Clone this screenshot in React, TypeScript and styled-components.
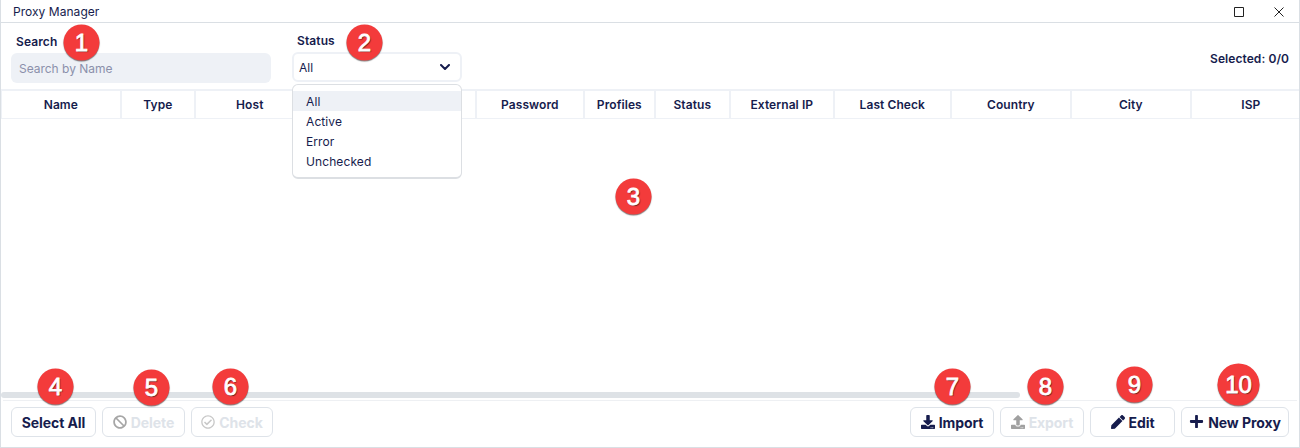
import React from "react";
import styled, { createGlobalStyle } from "styled-components";
import { FaBan, FaRegCheckCircle, FaDownload, FaUpload, FaPlus, FaPen } from "react-icons/fa";

const Global = createGlobalStyle`
  * { box-sizing: border-box; }
  body { margin: 0; background: #fff; font-family: Inter, sans-serif; color: #161c4d; }
`;

const Window = styled.div`
  position: relative;
  display: flex;
  flex-direction: column;
  width: 1300px;
  height: 448px;
  overflow: hidden;
  border: 1px solid #dadfe4;
  border-top: 0;
  background: #fff;
`;

const TitleBar = styled.header`
  display: flex;
  align-items: center;
  justify-content: space-between;
  height: 23px;
  padding: 1px 14px 0 12px;
  border-bottom: 1px solid #dadfe4;
  font-size: 12px;
  letter-spacing: 0.04px;
`;

const WindowControls = styled.div`
  display: flex;
  gap: 29px;
  align-items: center;

  svg {
    position: relative;
    top: 0.5px;
  }
`;

const Filters = styled.section`
  display: flex;
  height: 66px;
  padding: 10px 10px 0;
`;

const Field = styled.div<{ $width: number }>`
  position: relative;
  width: ${(p) => p.$width}px;
  margin-right: 21px;
`;

const Label = styled.label<{ $lift?: number }>`
  display: block;
  height: 20px;
  padding-left: 5px;
  line-height: ${(p) => 18 - (p.$lift ?? 0) * 2}px;
  font-size: 12px;
  font-weight: 600;
  letter-spacing: 0.1px;
`;

const SearchBox = styled.div`
  height: 30px;
  padding-left: 8px;
  border-radius: 6px;
  background: #eef1f6;
  color: #8b90ab;
  font-size: 12px;
  line-height: 31px;
  letter-spacing: -0.02px;
`;

const Select = styled.div`
  display: flex;
  align-items: center;
  justify-content: space-between;
  width: 170px;
  height: 30px;
  margin-top: -1px;
  padding: 1px 10px 0 5px;
  border: 2px solid #eef1f6;
  border-radius: 6px;
  font-size: 12px;

  svg {
    margin-top: -2px;
  }
`;

const Menu = styled.ul`
  position: absolute;
  z-index: 2;
  top: 51px;
  left: 0;
  width: 170px;
  height: 95px;
  margin: 0;
  padding: 6px 0;
  list-style: none;
  border: 1px solid #dcdfe3;
  border-bottom-width: 2px;
  border-radius: 6px;
  background: #fff;
`;

const Option = styled.li<{ $active?: boolean }>`
  height: 20px;
  padding-left: 13px;
  font-size: 12px;
  line-height: 21px;
  letter-spacing: 0.1px;
  background: ${(p) => (p.$active ? "#eef1f6" : "transparent")};
`;

const Selected = styled.div`
  margin-left: auto;
  padding-top: 18px;
  font-size: 12px;
  font-weight: 600;
  line-height: 16px;
  letter-spacing: 0.07px;
`;

const HeaderRow = styled.div`
  display: flex;
  height: 30px;
  border-top: 2px solid #eef1f6;
  border-bottom: 1px solid #eef1f6;
`;

const HeaderCell = styled.div<{ $width: number }>`
  flex: 0 0 ${(p) => p.$width}px;
  border: solid #eef1f6;
  border-width: 0 1px;
  text-align: center;
  font-size: 12px;
  font-weight: 600;
  line-height: 28px;
  letter-spacing: 0.08px;
  text-indent: -0.4px;
`;

const TableBody = styled.div`
  flex: 1;
`;

const ScrollThumb = styled.div`
  width: 1019px;
  height: 6px;
  border-radius: 3px;
  background: #dee2e6;
`;

const Footer = styled.footer`
  display: flex;
  gap: 6px;
  height: 47px;
  margin: 2px 2px 0;
  padding: 6px 8px 0;
  border-top: 1px solid #eef0f3;
`;

const Button = styled.button<{ $width: number; $disabled?: boolean }>`
  display: flex;
  align-items: center;
  justify-content: center;
  gap: 4px;
  width: ${(p) => p.$width}px;
  height: 30px;
  padding: 1px 0 0;
  border: 1px solid #dee3e9;
  border-radius: 6px;
  background: #fff;
  color: ${(p) => (p.$disabled ? "#dee3e9" : "#161c4d")};
  font: 700 14px Inter, sans-serif;
  letter-spacing: -0.08px;
  white-space: nowrap;

  svg {
    flex: none;
    margin-top: -2px;
  }
`;

const Spacer = styled.div`
  flex: 1;
`;

const Badge = styled.div<{ $x: number; $y: number; $size?: number }>`
  position: absolute;
  z-index: 3;
  left: ${(p) => p.$x - (p.$size ?? 36) / 2 - 1}px;
  top: ${(p) => p.$y - (p.$size ?? 36) / 2}px;
  width: ${(p) => p.$size ?? 36}px;
  height: ${(p) => p.$size ?? 36}px;
  transform: translate(0.5px, 0.5px);
  border-radius: 50%;
  background: #f33b3b;
  box-shadow: 0 1px 1px rgba(0, 0, 0, 0.5);
  color: #fff;
  font: 400 24px "Liberation Sans", sans-serif;
  -webkit-text-stroke: 0.8px #fff;
  line-height: ${(p) => p.$size ?? 36}px;
  text-align: center;
  text-shadow: 1px 1px 1px rgba(0, 0, 0, 0.6);
`;

const columns: [string, number][] = [
  ["Name", 120],
  ["Type", 74],
  ["Host", 110],
  ["", 171],
  ["Password", 108],
  ["Profiles", 71],
  ["Status", 75],
  ["External IP", 104],
  ["Last Check", 117],
  ["Country", 120],
  ["City", 120],
  ["ISP", 120],
];

const badges: [number, number, number?][] = [
  [81, 42],
  [364, 42],
  [633, 196],
  [55, 386],
  [151, 387],
  [230, 386],
  [952, 386],
  [1045, 386],
  [1134, 384],
  [1238, 384, 42],
];

export default function App() {
  return (
    <Window>
      <Global />
      <TitleBar>
        <span>Proxy Manager</span>
        <WindowControls>
          <svg width="11" height="11" fill="none" stroke="#222">
            <path d="M.5.5h9v9h-9z" />
          </svg>
          <svg width="11" height="11" fill="none" stroke="#222">
            <path d="m.5.5 9 9M9.500.5l-9 9" />
          </svg>
        </WindowControls>
      </TitleBar>
      <Filters>
        <Field $width={260}>
          <Label>Search</Label>
          <SearchBox>Search by Name</SearchBox>
        </Field>
        <Field $width={170}>
          <Label $lift={1}>Status</Label>
          <Select>
            All
            <svg width="10" height="6" fill="none" stroke="#161c4d" strokeWidth="2" strokeLinecap="round" strokeLinejoin="round">
              <path d="m1 1 4 4 4-4" />
            </svg>
          </Select>
          <Menu>
            <Option $active>All</Option>
            <Option>Active</Option>
            <Option>Error</Option>
            <Option>Unchecked</Option>
          </Menu>
        </Field>
        <Selected>Selected: 0/0</Selected>
      </Filters>
      <HeaderRow>
        {columns.map(([name, width], i) => (
          <HeaderCell key={i} $width={width}>{name}</HeaderCell>
        ))}
      </HeaderRow>
      <TableBody />
      <ScrollThumb />
      <Footer>
        <Button $width={85}>Select All</Button>
        <Button $width={83} $disabled><FaBan size={14} color="#a6a6a6" />Delete</Button>
        <Button $width={82} $disabled><FaRegCheckCircle size={14} color="#c8c8c8" />Check</Button>
        <Spacer />
        <Button $width={84}><FaDownload size={14} />Import</Button>
        <Button $width={84} $disabled><FaUpload size={14} color="#a0a0a0" />Export</Button>
        <Button $width={85}><FaPen size={14} />Edit</Button>
        <Button $width={108}><FaPlus size={15} />New Proxy</Button>
      </Footer>
      {badges.map(([x, y, size], i) => (
        <Badge key={i} $x={x} $y={y} $size={size}>{i + 1}</Badge>
      ))}
    </Window>
  );
}
